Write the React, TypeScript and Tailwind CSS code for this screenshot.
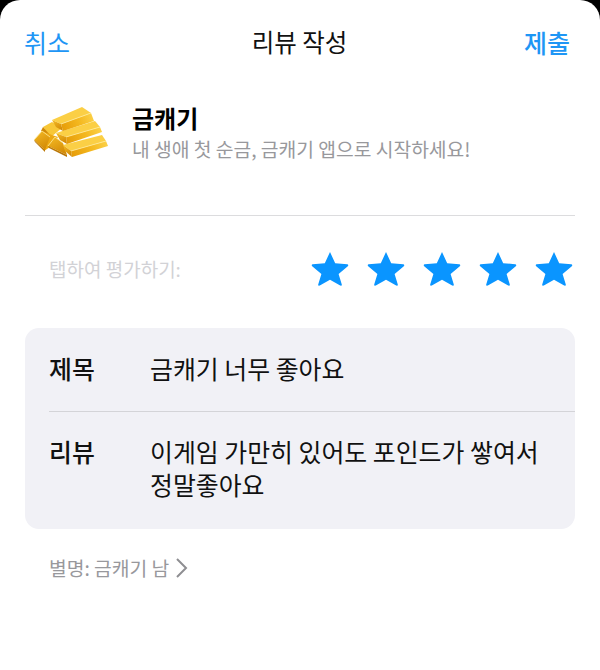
const font = { fontFamily: '"Noto Sans CJK KR", sans-serif' };

function Star() {
  return (
    <svg width="38" height="36" viewBox="0 0 38 36">
      <path
        d="M19 1 L24.2 12.2 L36.2 13.2 C37.4 13.4 37.6 14.4 36.8 15.2 L27.6 23 L30.8 33.4 C31 34.4 30.2 35 29.2 34.6 L19 28.8 L8.8 34.6 C7.8 35 7 34.4 7.2 33.4 L10.4 23 L1.2 15.2 C0.4 14.4 0.6 13.4 1.8 13.2 L13.8 12.2 Z"
        fill="#0a95ff"
      />
    </svg>
  );
}

function Bar({ top, front, end, edge }: { top: string; front: string; end: string; edge: string }) {
  return (
    <g>
      <polygon points={top} fill="#fbcf45" />
      <polygon points={front} fill="url(#front)" />
      <polygon points={end} fill="url(#end)" />
      <polyline points={edge} fill="none" stroke="#feeb9c" strokeWidth="0.8" />
    </g>
  );
}

function GoldBars() {
  return (
    <svg width="82" height="56" viewBox="30 104 82 56">
      <defs>
        <linearGradient id="front" x1="0" y1="0.6" x2="1" y2="0.4">
          <stop offset="0" stopColor="#e79e0a" />
          <stop offset="0.55" stopColor="#f4b81f" />
          <stop offset="1" stopColor="#fbcf44" />
        </linearGradient>
        <linearGradient id="end" x1="0" y1="0" x2="0.5" y2="1">
          <stop offset="0" stopColor="#f5bb25" />
          <stop offset="1" stopColor="#d48c07" />
        </linearGradient>
      </defs>
      {/* rear bar behind the left stack */}
      <polygon points="43,127 52,122 62,128 51,137" fill="#f8c737" />
      <polygon points="43,127 51,136 49,139 41,131" fill="#cf8806" />
      {/* left end-on bars of the bottom layer */}
      <polygon points="42,131 52,135 58,137 50,147 44,151" fill="#eda912" />
      <polygon points="34,140 42,131 50,137 45,150" fill="url(#end)" />
      <polyline points="34,140 42,131 50,137" fill="none" stroke="#feeb9c" strokeWidth="0.8" />
      <polygon points="34,140 45,150 45,152 35,142" fill="#b97605" />
      <polygon points="48,146 55,137 63,143 67,155" fill="url(#end)" />
      <polyline points="48,146 55,137 63,143" fill="none" stroke="#feeb9c" strokeWidth="0.8" />
      <polygon points="48,146 67,155 67,157 49,148" fill="#b97605" />
      <Bar
        top="63,145 102,135 106,141 71,151"
        front="71,151 106,141 108,146 72,157"
        end="63,145 71,151 72,157 65,151"
        edge="71,151 106,141"
      />
      <Bar
        top="56,133 95,121 100,127 66,137"
        front="66,137 100,127 102,132 67,144"
        end="56,133 66,137 67,144 60,140"
        edge="66,137 100,127"
      />
      <Bar
        top="52,120 82,107 91,113 61,124"
        front="61,124 91,113 94,121 63,131"
        end="52,120 61,124 63,131 56,127"
        edge="61,124 91,113"
      />
    </svg>
  );
}

export default function App() {
  return (
    <div className="w-[600px] h-[670px] bg-black overflow-hidden" style={font}>
      <div className="w-full h-full bg-white rounded-t-[20px] flex flex-col px-[25px]">
        <div className="flex items-center justify-between h-[86px] pb-px -ml-px pr-[5px] text-[25px] leading-none">
          <span className="text-[#1e96f5]">취소</span>
          <span className="text-[#111] text-[24.5px] ml-[5px]">리뷰 작성</span>
          <span className="text-[#1e96f5] font-medium">제출</span>
        </div>
        <div className="flex items-start h-[130px] border-b border-[#dcdcde] pt-[16px]">
          <div className="w-[107px] shrink-0 flex pl-[5px] pt-[2px]">
            <GoldBars />
          </div>
          <div className="flex flex-col">
            <span className="text-[24px] leading-[32px] font-bold text-black">금캐기</span>
            <span className="text-[19.25px] leading-[30px] text-[#98989c]">내 생애 첫 순금, 금캐기 앱으로 시작하세요!</span>
          </div>
        </div>
        <div className="flex items-center justify-between h-[112px] pb-[6px] pl-[24px] pr-[2px]">
          <span className="text-[19px] leading-[28px] text-[#d2d2d6]">탭하여 평가하기:</span>
          <div className="flex gap-[18px]">
            <Star />
            <Star />
            <Star />
            <Star />
            <Star />
          </div>
        </div>
        <div className="bg-[#f1f1f6] rounded-[14px] flex flex-col pl-[24px] h-[201px]">
          <div className="flex items-center h-[84px] pb-[3px] border-b border-[#d4d4d8] text-[24.9px] leading-[38px]">
            <span className="w-[101px] font-medium text-[#111]">제목</span>
            <span className="text-[#111]">금캐기 너무 좋아요</span>
          </div>
          <div className="flex pt-[23px] text-[24.9px] leading-[33px] pr-[30px]">
            <span className="w-[101px] shrink-0 font-medium text-[#111]">리뷰</span>
            <span className="text-[#111]">이게임 가만히 있어도 포인드가 쌓여서<br />정말좋아요</span>
          </div>
        </div>
        <div className="flex items-center gap-[6px] pl-[24px] pt-[25px] text-[19.25px] leading-[28px] text-[#98989c]">
          <span>별명: 금캐기 남</span>
          <svg width="13" height="20" viewBox="0 0 13 20" fill="none" stroke="#8e8e92" strokeWidth="2">
            <path d="M2 1 L11 10 L2 19" />
          </svg>
        </div>
      </div>
    </div>
  );
}
